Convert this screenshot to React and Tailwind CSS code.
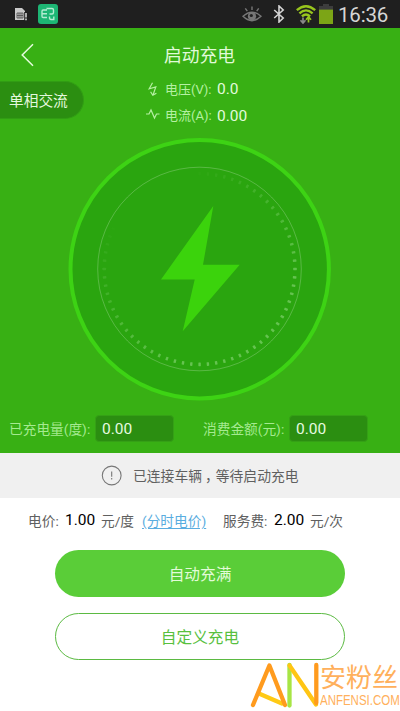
import React from "react";

function dotOpacity(deg) {
  if (deg <= 90) return 0.02 + (deg / 90) * 0.3;
  if (deg <= 195) return 0.34;
  return Math.max(0, 0.34 * (1 - (deg - 195) / 105));
}

function Dial() {
  const ticks = Array.from({ length: 72 }, (_, i) => i * 5);
  return (
    <svg className="block h-[264px] w-[264px]" viewBox="68 137 264 264">
      <circle cx="199.7" cy="269.2" r="129.2" fill="#2aa50f" stroke="#3dd314" strokeWidth="4" />
      <circle cx="199.5" cy="269" r="101.8" fill="none" stroke="#fff" strokeOpacity="0.22" strokeWidth="1" />
      {ticks.map((d) => (
        <rect key={d} x="198.4" y="171.8" width="2.4" height="3.6" rx="0.4" fill="#d8ffd0" opacity={dotOpacity(d)} transform={`rotate(${d} 199.6 269)`} />
      ))}
      <path d="M213.3 206 L203 264.8 H239.7 L182.7 331.3 L194.7 279.4 H161 Z" fill="#3bd30c" />
    </svg>
  );
}

function StatusBar() {
  return (
    <div className="flex h-7 items-center bg-[#1f1f1f] text-[#d6d6d6]">
      <svg className="ml-[14px] h-[14px] w-[14px] shrink-0" viewBox="0 0 14 14">
        <path d="M1 1h7l3 3v9H1Z" fill="#c9c9c9" />
        <path d="M3 6h6v5H3Z M5 6v5 M7 6v5 M3 8.5h6" fill="none" stroke="#4a4a4a" strokeWidth="0.8" />
        <path d="M10.2 5h3v9h-3Z" fill="#1f1f1f" />
        <path d="M12 6v4.4 M12 11.6v1.6" stroke="#ddd" strokeWidth="1.5" />
      </svg>
      <svg className="ml-[10px] h-5 w-5 shrink-0" viewBox="0 0 20 20">
        <rect width="20" height="20" rx="3" fill="#1db574" />
        <path d="M9 6H5.2Q4 6 4 7.2V12.3Q4 13.5 5.2 13.5H9 M4 9.7h5 M8.5 4.5H14Q15.5 4.5 15.5 6V8.5Q15.5 10 14 10H11.5 M11.5 12.5V13.5Q11.5 15.5 13 15.5H15.8V12.5" fill="none" stroke="#b4ebd2" strokeWidth="1.4" />
      </svg>
      <svg className="ml-[184px] h-[18px] w-5 shrink-0" viewBox="0 0 20 18">
        <path d="M1 11.3Q10 3 19 11.3Q10 20 1 11.3Z" fill="none" stroke="#777" strokeWidth="1.4" />
        <circle cx="10" cy="11.3" r="4.1" fill="#777" />
        <circle cx="9.3" cy="10.5" r="1.6" fill="#222" />
        <path d="M10 1.4v3.5 M3.3 3.4l2 2.8 M16.7 3.4l-2 2.8" stroke="#777" strokeWidth="1.4" />
      </svg>
      <svg className="ml-[11px] h-[18px] w-3 shrink-0" viewBox="0 0 12 18">
        <path d="M1.2 5l9 8L6 17V1l4.2 4-9 8" fill="none" stroke="#d4d4d4" strokeWidth="1.6" />
      </svg>
      <svg className="ml-[11px] h-5 w-5 shrink-0" viewBox="0 0 20 20">
        <g fill="none" stroke="#98c51d" strokeWidth="2.3">
          <path d="M0.8 6.2Q10-1.8 19.2 6.2" />
          <path d="M3.4 9.4Q10 3.4 16.6 9.4" />
          <path d="M5.9 12.3Q10 8.6 14.1 12.3" />
        </g>
        <path d="M7 13.5v5 M4.5 16.2L7 19l2.5-2.8" fill="none" stroke="#888" strokeWidth="1.7" />
        <path d="M12.5 18.5v-5 M10 15.7l2.5-2.8 2.5 2.8" fill="none" stroke="#98c51d" strokeWidth="1.7" />
      </svg>
      <svg className="ml-[3px] h-5 w-[14px] shrink-0" viewBox="0 0 14 20">
        <path d="M4 0h6v2h4v4H0V2h4Z" fill="#3d3d3d" />
        <path d="M0 5.6h14V20H0Z" fill="#7ca516" />
      </svg>
      <span className="ml-[5px] mt-[2px] text-[20.5px] leading-7 tracking-[-0.2px]">16:36</span>
    </div>
  );
}

function Metric({ icon, label, value, valueClass }) {
  return (
    <div className="flex h-[26px] items-center pl-[146px]">
      {icon}
      <span className="ml-[5px] mt-[2px] w-[47px] whitespace-nowrap text-[13px] text-[#b5f0a2]">{label}</span>
      <span className={`ml-[5px] text-[15.5px] text-[#e2fbdc] ${valueClass}`}>{value}</span>
    </div>
  );
}

function Field({ label, value }) {
  return (
    <div className="flex items-center">
      <span className="mt-[2px] w-[86px] whitespace-nowrap text-[13.7px] text-[#a5ea90]">{label}</span>
      <span className="flex h-[27px] w-[79px] items-center rounded-sm border border-[#35a016] bg-[#2b8e11] pl-[6px] pt-[3px] text-[15.5px] text-[#e6fbe0]">{value}</span>
    </div>
  );
}

function Watermark() {
  return (
    <div className="absolute left-[250px] top-[661px] flex h-[50px] w-[150px]">
      <svg className="h-[50px] w-[70px] shrink-0" viewBox="0 0 70 50" fill="none" strokeWidth="4.3" strokeLinecap="round">
        <path d="M10 33L32 42.5" stroke="#ffca15" />
        <path d="M3 44L19.4 4.5L35 44" stroke="#ff9b1e" strokeLinejoin="round" />
        <path d="M39.5 4V44.5" stroke="#a7e545" />
        <path d="M39.5 4.5L66 43.5" stroke="#ffc514" />
        <path d="M66.3 4V42" stroke="#ff9b1e" />
      </svg>
      <div className="w-20 text-[#ffb05c]">
        <div className="h-[32px] whitespace-nowrap pt-[2px] text-[26px] leading-[31px]">安粉丝</div>
        <div className="h-[15px] w-[96px] origin-left scale-x-[0.82] whitespace-nowrap font-['Liberation_Sans'] text-[14px] leading-[15px]">ANFENSI.COM</div>
      </div>
    </div>
  );
}

export default function App() {
  return (
    <div lang="zh-CN" className="relative h-[711px] w-[400px] overflow-hidden bg-white font-['Roboto','Noto_Sans_CJK_SC',sans-serif] font-normal">
      <StatusBar />
      <main>
        <section className="h-[425px] bg-[#38b014]">
          <header className="flex h-[53px] items-center">
            <svg className="ml-[21px] h-6 w-[13px]" viewBox="0 0 13 24">
              <path d="M12 1.3L1.2 12L12 22.7" fill="none" stroke="#e4fddd" strokeWidth="1.5" />
            </svg>
            <h1 className="ml-[130px] mt-[4px] text-[17.8px] font-normal text-[#e0fad8]">启动充电</h1>
          </header>
          <div className="flex h-[56px]">
            <div className="flex h-[38px] w-[84px] shrink-0 items-center rounded-r-full border border-l-0 border-[#319d14] bg-[#2b8e11] pl-[9px] pt-[3px] text-[14.7px] text-[#e4f8de]">单相交流</div>
            <div className="-ml-[84px] -mt-[5px]">
              <Metric
                label="电压(V):"
                value="0.0"
                valueClass="mt-px"
                icon={
                  <svg className="h-[15px] w-[14px]" viewBox="0 0 14 15">
                    <path d="M6.5 0.8L3.2 6.8L9.8 5L7 13 M4.6 9.8L6.8 13.3L10.4 11.2" fill="none" stroke="#b5f0a2" strokeWidth="1.2" />
                  </svg>
                }
              />
              <Metric
                label="电流(A):"
                value="0.00"
                valueClass="mt-[4px]"
                icon={
                  <svg className="h-[15px] w-[14px]" viewBox="0 0 14 15">
                    <path d="M0 6H3L5 2L8.5 10L10.5 6H13.5" fill="none" stroke="#b5f0a2" strokeWidth="1.2" />
                  </svg>
                }
              />
            </div>
          </div>
          <div className="flex h-[264px] justify-center">
            <Dial />
          </div>
          <div className="flex h-[55px] items-center justify-between pl-[9px] pr-[32px]">
            <Field label="已充电量(度):" value="0.00" />
            <Field label="消费金额(元):" value="0.00" />
          </div>
        </section>
        <section className="flex h-[45px] items-center bg-[#f0f0f0] pl-[101px] text-[13.8px] text-[#606060]">
          <svg className="h-[21px] w-[21px]" viewBox="0 0 21 21">
            <circle cx="10.7" cy="10.5" r="9.4" fill="none" stroke="#777" strokeWidth="1.1" />
            <path d="M10.7 6.5v5.3 M10.7 13v1.4" stroke="#777" strokeWidth="1.1" />
          </svg>
          <span className="ml-[11px] mt-px">已连接车辆<span className="pl-[3px] tracking-[-3px]">，</span>等待启动充电</span>
        </section>
        <section className="flex h-[45px] items-center whitespace-nowrap pl-7 pt-px text-[13.7px] text-[#606060]">
          <span className="w-[37px]">电价:</span>
          <span className="w-9 text-[15.5px] text-black">1.00</span>
          <span className="w-[41px]">元/度</span>
          <span className="w-[81px] text-[#5aade0] underline underline-offset-2">(分时电价)</span>
          <span className="w-[51px]">服务费:</span>
          <span className="w-9 text-[15.5px] text-black">2.00</span>
          <span>元/次</span>
        </section>
        <section className="flex flex-col items-center gap-4 pt-[7px] text-[15.7px]">
          <button className="h-[47px] w-[290px] rounded-full bg-[#5acd38] pt-[2px] text-[#e2fbd8]">自动充满</button>
          <button className="h-[47px] w-[290px] rounded-full border border-[#5bba42] bg-white pt-[2px] text-[#58c03e]">自定义充电</button>
        </section>
      </main>
      <Watermark />
    </div>
  );
}
